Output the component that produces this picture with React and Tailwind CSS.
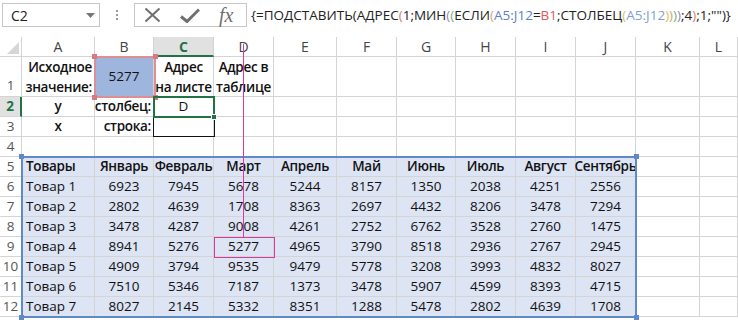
import React from 'react';

const cols = ['A', 'B', 'C', 'D', 'E', 'F', 'G', 'H', 'I', 'J', 'K', 'L'];

const months = ['Январь', 'Февраль', 'Март', 'Апрель', 'Май', 'Июнь', 'Июль', 'Август', 'Сентябрь'];

const goods = [
  ['Товар 1', 6923, 7945, 5678, 5244, 8157, 1350, 2038, 4251, 2556],
  ['Товар 2', 2802, 4639, 1708, 8363, 2697, 4432, 8206, 3478, 7294],
  ['Товар 3', 3478, 4287, 9008, 4261, 2752, 6762, 3528, 2760, 1475],
  ['Товар 4', 8941, 5276, 5277, 4965, 3790, 8518, 2936, 2767, 2945],
  ['Товар 5', 4909, 3794, 9535, 9479, 5778, 3208, 3993, 4832, 8027],
  ['Товар 6', 7510, 5346, 7187, 1373, 3478, 5907, 4599, 8393, 4715],
  ['Товар 7', 8027, 2145, 5332, 8351, 1288, 5478, 2802, 4639, 1708],
];

// formula pieces with the bracket colours excel gives
const formula = [
  ['{=ПОДСТАВИТЬ(АДРЕС', 'text-[#222]'],
  ['(', 'text-[#e07b6a]'],
  ['1;МИН', 'text-[#222]'],
  ['(', 'text-[#9b7fc4]'],
  ['(', 'text-[#6fb56f]'],
  ['ЕСЛИ', 'text-[#222]'],
  ['(', 'text-[#d0a868]'],
  ['A5:J12', 'text-[#5b82c8]'],
  ['=', 'text-[#222]'],
  ['B1', 'text-[#dd5a5a]'],
  [';СТОЛБЕЦ', 'text-[#222]'],
  ['(', 'text-[#d9c063]'],
  ['A5:J12', 'text-[#7e9fd6]'],
  [')', 'text-[#d9c063]'],
  [')', 'text-[#d0a868]'],
  [')', 'text-[#6fb56f]'],
  [')', 'text-[#9b7fc4]'],
  [';4', 'text-[#222]'],
  [')', 'text-[#e07b6a]'],
  [';1;"")}', 'text-[#222]'],
];

function Cell({ children, className = '' }) {
  return (
    <div className={`border-r border-b border-[#d4d4d4] flex items-center overflow-visible whitespace-nowrap ${className}`}>
      {children}
    </div>
  );
}

function Empty({ n }) {
  return Array.from({ length: n }, (_, i) => <Cell key={i} />);
}

function Handle({ className }) {
  return <div className={`absolute w-[5px] h-[5px] ${className}`} />;
}

function FormulaBar() {
  return (
    <div className="h-[37px] flex items-start pt-[3px] pl-[2px] bg-white">
      <div className="w-[98px] h-[24px] border border-[#c6c6c6] flex items-center justify-between pl-[8px] pr-[4px] text-[14px] text-[#222]">
        <span>C2</span>
        <svg width="9" height="5" viewBox="0 0 9 5"><path d="M0 0h9L4.5 5z" fill="#777" /></svg>
      </div>
      <div className="w-[34px] h-[24px] flex flex-col items-center justify-center gap-[2px]">
        <div className="w-[2px] h-[2px] bg-[#9a9a9a]" />
        <div className="w-[2px] h-[2px] bg-[#9a9a9a]" />
        <div className="w-[2px] h-[2px] bg-[#9a9a9a]" />
      </div>
      <div className="w-[113px] h-[24px] border border-[#c6c6c6] flex items-center pl-[9px] gap-[19px]">
        <svg width="17" height="16" viewBox="0 0 17 16">
          <path d="M1.5 1.5l14 13M15.5 1.5l-14 13" stroke="#6f6f6f" strokeWidth="2" fill="none" />
        </svg>
        <svg width="20" height="15" viewBox="0 0 20 15">
          <path d="M1 8.5l6 5L19 1.5" stroke="#6f6f6f" strokeWidth="3" fill="none" />
        </svg>
        <span className="font-['Liberation_Serif',serif] italic text-[20px] text-[#6f6f6f] leading-none">fx</span>
      </div>
      <div className="flex-1 h-[24px] flex items-center pl-[4px] text-[13.5px] whitespace-nowrap overflow-hidden">
        {formula.map(([t, c], i) => (
          <span key={i} className={c}>{t}</span>
        ))}
      </div>
    </div>
  );
}

function Sheet() {
  const inTable = 'bg-[#dde4f4] border-[#c3cbe0]';
  const bold = 'font-semibold tracking-[-0.3px]';
  return (
    <div className="relative">
      <div className="grid grid-cols-[22px_73px_59px_60px_60px_63px_60px_59px_60px_60px_60px_64px_1fr] grid-rows-[20px_40px_repeat(12,20px)] text-[13.5px] text-[#111]">
        {/* column headers */}
        <Cell className="relative bg-white">
          <svg className="absolute right-[2px] bottom-[2px]" width="12" height="12" viewBox="0 0 12 12">
            <path d="M12 0v12H0z" fill="#d6d6d6" />
          </svg>
        </Cell>
        {cols.map((c) => (
          <Cell
            key={c}
            className={`justify-center text-[14px] ${c === 'C' ? 'bg-[#e1e1e1] text-[#217346] font-bold border-b-2 border-b-[#217346]' : 'text-[#444]'}`}
          >
            {c}
          </Cell>
        ))}

        {/* row 1 */}
        <Cell className="justify-center items-end pb-[1px] text-[#555]">1</Cell>
        <Cell className={`justify-end pr-[2px] leading-[20px] text-right ${bold}`}>
          <div>Исходное<br />значение:</div>
        </Cell>
        <Cell className="justify-center bg-[#9eb5dd]">5277</Cell>
        <Cell className={`justify-center leading-[20px] text-center ${bold}`}>
          <div>Адрес<br />на листе</div>
        </Cell>
        <Cell className={`justify-center leading-[20px] text-center ${bold}`}>
          <div>Адрес в<br />таблице</div>
        </Cell>
        <Empty n={8} />

        {/* row 2 */}
        <Cell className="justify-center bg-[#e1e1e1] text-[#217346] font-bold border-r-2 border-r-[#217346]">2</Cell>
        <Cell className={`justify-center ${bold}`}>y</Cell>
        <Cell className={`justify-end pr-[2px] ${bold}`}>столбец:</Cell>
        <Cell className="justify-center">D</Cell>
        <Empty n={9} />

        {/* row 3 */}
        <Cell className="justify-center text-[#555]">3</Cell>
        <Cell className={`justify-center ${bold}`}>x</Cell>
        <Cell className={`justify-end pr-[2px] ${bold}`}>строка:</Cell>
        <Empty n={10} />

        {/* row 4 */}
        <Cell className="justify-center text-[#555]">4</Cell>
        <Empty n={12} />

        {/* row 5 */}
        <Cell className="justify-center text-[#555]">5</Cell>
        <Cell className={`pl-[4px] ${bold} ${inTable}`}>Товары</Cell>
        {months.map((m) => (
          <Cell key={m} className={`justify-center ${bold} ${inTable}`}>{m}</Cell>
        ))}
        <Empty n={2} />

        {/* data rows */}
        {goods.map((row, r) => (
          <React.Fragment key={r}>
            <Cell className="justify-center text-[#555]">{r + 6}</Cell>
            <Cell className={`pl-[4px] ${inTable}`}>{row[0]}</Cell>
            {row.slice(1).map((v, i) => (
              <Cell key={i} className={`justify-center ${inTable}`}>{v}</Cell>
            ))}
            <Empty n={2} />
          </React.Fragment>
        ))}
      </div>

      {/* table selection A5:J12 */}
      <div className="absolute left-[21px] top-[119px] w-[616px] h-[162px] border-2 border-[#5f89c8]">
        <Handle className="-left-[4px] -top-[4px] bg-[#5f89c8]" />
        <Handle className="-right-[4px] -top-[4px] bg-[#5f89c8]" />
        <Handle className="-left-[4px] -bottom-[4px] bg-[#5f89c8]" />
        <Handle className="-right-[4px] -bottom-[4px] bg-[#5f89c8]" />
      </div>

      {/* B1 range finder */}
      <div className="absolute left-[94px] top-[19px] w-[62px] h-[42px] border-2 border-[#de8f94]">
        <Handle className="-left-[4px] -top-[4px] bg-[#d57a82]" />
        <Handle className="-right-[4px] -top-[4px] bg-[#d57a82]" />
        <Handle className="-left-[4px] -bottom-[4px] bg-[#d57a82]" />
        <Handle className="-right-[4px] -bottom-[4px] bg-[#d57a82]" />
      </div>

      {/* C3 outline */}
      <div className="absolute left-[153px] top-[79px] w-[62px] h-[21px] border border-[#111]" />

      {/* active cell C2 */}
      <div className="absolute left-[153px] top-[59px] w-[62px] h-[22px] border-2 border-[#217346]">
        <Handle className="-right-[4px] -bottom-[4px] bg-[#217346] border border-white w-[6px] h-[6px]" />
      </div>

      {/* pointer line to D9 */}
      <div className="absolute left-[243px] top-[7px] w-[1px] h-[194px] bg-[#d63a9e]" />
      <div className="absolute left-[214px] top-[200px] w-[61px] h-[21px] border border-[#d63a9e]" />
    </div>
  );
}

export default function App() {
  return (
    <div className="w-[738px] h-[320px] overflow-hidden bg-white font-['Open_Sans',sans-serif]">
      <FormulaBar />
      <Sheet />
    </div>
  );
}
